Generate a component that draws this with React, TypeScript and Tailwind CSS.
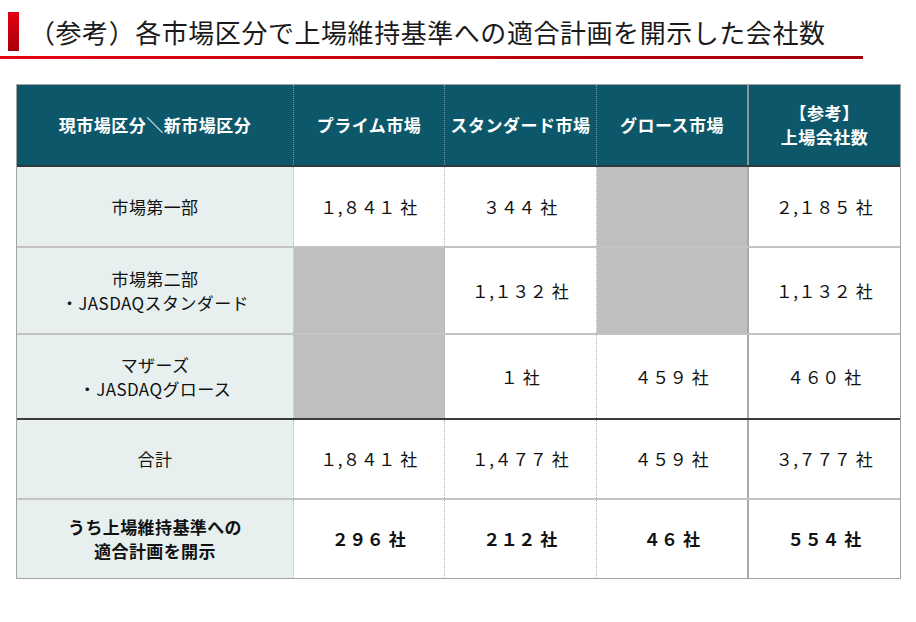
import React from 'react'

type Row = {
  label: string[]
  cells: (string | null)[]
  height: string
  line: string
  bold?: boolean
}

const LIGHT = 'border-b-2 border-b-[#c4c4c4]'
const DARK = 'border-b-2 border-b-[#3c3c3c]'

const rows: Row[] = [
  {
    label: ['市場第一部'],
    cells: ['１,８４１ 社', '３４４ 社', null, '２,１８５ 社'],
    height: 'h-[81px]',
    line: LIGHT,
  },
  {
    label: ['市場第二部', '・JASDAQスタンダード'],
    cells: [null, '１,１３２ 社', null, '１,１３２ 社'],
    height: 'h-[87px]',
    line: LIGHT,
  },
  {
    label: ['マザーズ', '・JASDAQグロース'],
    cells: [null, '１ 社', '４５９ 社', '４６０ 社'],
    height: 'h-[85px]',
    line: DARK,
  },
  {
    label: ['合計'],
    cells: ['１,８４１ 社', '１,４７７ 社', '４５９ 社', '３,７７７ 社'],
    height: 'h-[80px]',
    line: LIGHT,
  },
  {
    label: ['うち上場維持基準への', '適合計画を開示'],
    cells: ['２９６ 社', '２１２ 社', '４６ 社', '５５４ 社'],
    height: 'h-[78px]',
    line: '',
    bold: true,
  },
]

// right-hand separators for the 4 data columns (last one has none)
const dataSep = [
  'border-r border-dotted border-r-[#b4b4b4]',
  'border-r border-dotted border-r-[#b4b4b4]',
  'border-r-2 border-solid border-r-[#a8a8a8]',
  '',
]
const widths = ['w-[151px]', 'w-[152px]', 'w-[152px]', 'w-[151px]']

const headers = ['プライム市場', 'スタンダード市場', 'グロース市場']

export default function App() {
  return (
    <div className="h-[622px] w-[916px] bg-white font-['Noto_Sans_CJK_JP','Noto_Sans',sans-serif] text-[#111]">
      {/* Title */}
      <div className="flex items-start pl-[8px] pt-[12px]">
        <div className="h-[39px] w-[11px] bg-linear-to-b from-[#e60012] to-[#a8000c]" />
        <h1 className="ml-[10px] text-[26px] leading-[39px] font-normal tracking-[0.55px] text-[#1a1a1a]">
          （参考）各市場区分で上場維持基準への適合計画を開示した会社数
        </h1>
      </div>
      <div className="mt-[5px] h-[3px] w-[863px] bg-linear-to-r from-[#e60012] to-[#a00008]" />

      {/* Table */}
      <div className="ml-[16px] mt-[25px] w-[885px] border border-[#a3a3a3]">
        {/* Header */}
        <div className="flex h-[82px] border-b-2 border-b-[#2e3a3d] bg-[#0c586a] text-[17px] font-bold tracking-[0.5px] text-white">
          <div className="flex w-[277px] items-center justify-center border-r border-dotted border-r-[#7f9aa1]">
            現市場区分＼新市場区分
          </div>
          {headers.map((h, i) => (
            <div
              key={h}
              className={`flex items-center justify-center ${widths[i]} ${
                i < 2
                  ? 'border-r border-dotted border-r-[#7f9aa1]'
                  : 'border-r-2 border-solid border-r-[#8a9599]'
              }`}
            >
              {h}
            </div>
          ))}
          <div className="flex w-[151px] flex-col items-center justify-center leading-[24px]">
            <span>【参考】</span>
            <span>上場会社数</span>
          </div>
        </div>

        {/* Body */}
        {rows.map((row, r) => (
          <div key={r} className={`flex ${row.height} ${row.line}`}>
            <div
              className={`flex w-[277px] flex-col items-center justify-center border-r border-dotted border-r-[#b4b4b4] bg-[#e7f0ef] text-center tracking-[0.4px] ${
                row.bold ? 'text-[17px] leading-[24px] font-bold' : 'text-[17px] leading-[24px]'
              }`}
            >
              {row.label.map((l) => (
                <span key={l}>{l}</span>
              ))}
            </div>
            {row.cells.map((c, i) => (
              <div
                key={i}
                className={`flex items-center justify-center whitespace-pre ${widths[i]} ${dataSep[i]} ${
                  c === null ? 'bg-[#bfbfbf]' : 'bg-white'
                } ${row.bold ? 'text-[17px] font-bold tracking-[0.5px]' : 'text-[17px] tracking-[0.6px]'}`}
              >
                {c}
              </div>
            ))}
          </div>
        ))}
      </div>
    </div>
  )
}
